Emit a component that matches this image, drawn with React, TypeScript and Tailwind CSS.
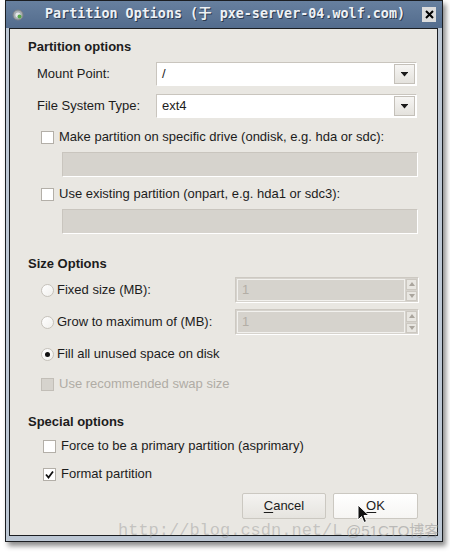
const sans = { fontFamily: '"Liberation Sans", Arial, sans-serif' };

function Combo({ value }: { value: string }) {
  return (
    <div className="flex h-[24px] w-[261px] border border-[#c9c5be] border-b-white border-r-white bg-white">
      <div className="flex flex-1 items-center pl-[5px] text-[13px] text-[#1c1c1c]">{value}</div>
      <div className="my-[1px] mr-[1px] flex w-[21px] items-center justify-center border border-[#c4c0b9] bg-gradient-to-b from-[#f6f5f3] to-[#e4e2dd]">
        <svg width="7" height="5" viewBox="0 0 7 5">
          <rect x="0" y="0" width="7" height="1" fill="#1a1a1a" />
          <path d="M0.5 1 L6.5 1 L3.5 4.5 Z" fill="#1a1a1a" />
        </svg>
      </div>
    </div>
  );
}

function Check({ checked, disabled }: { checked?: boolean; disabled?: boolean }) {
  return (
    <div
      className={`flex h-[13px] w-[13px] shrink-0 items-center justify-center border ${
        disabled ? 'border-[#c2beb7] bg-[#d6d3cd]' : 'border-[#b3afa8] bg-white'
      }`}
    >
      {checked && (
        <svg width="9" height="9" viewBox="0 0 9 9">
          <path d="M1 4.5 L3.5 7.5 L8 1.5" stroke="#111" strokeWidth="1.8" fill="none" />
        </svg>
      )}
    </div>
  );
}

function Radio({ checked }: { checked?: boolean }) {
  return (
    <div className="flex h-[13px] w-[13px] shrink-0 items-center justify-center rounded-full border border-[#c6c2bb] bg-gradient-to-br from-white to-[#f0efec]">
      {checked && <div className="h-[5px] w-[5px] rounded-full bg-[#111]" />}
    </div>
  );
}

function Spin() {
  return (
    <div className="flex h-[26px] w-[184px] border border-[#cdc9c2] border-b-white border-r-white bg-[#d6d3cd]">
      <div className="m-[1px] flex flex-1 items-center border border-[#f2f1ee] pl-[4px] text-[13px] text-[#b3aea6]">
        1
      </div>
      <div className="flex w-[12px] flex-col gap-[1px] py-[1px] pr-[1px]">
        {[0, 1].map((i) => (
          <div
            key={i}
            className="flex flex-1 items-center justify-center border border-[#ccc8c1] bg-[#e8e6e1]"
          >
            <svg width="6" height="4" viewBox="0 0 6 4">
              <path d={i === 0 ? 'M0 4 L6 4 L3 0 Z' : 'M0 0 L6 0 L3 4 Z'} fill="#aaa59d" />
            </svg>
          </div>
        ))}
      </div>
    </div>
  );
}

function Field() {
  return (
    <div className="ml-[52px] h-[25px] w-[356px] border border-[#c9c5be] border-b-white border-r-white bg-[#d6d3cd]" />
  );
}

function Button({ label, hot, active }: { label: string; hot: string; active?: boolean }) {
  const rest = label.slice(hot.length);
  return (
    <div
      className={`flex h-[26px] items-center justify-center rounded-[2px] border border-[#cbc8c1] text-[13px] text-[#1c1c1c] ${
        active ? 'bg-gradient-to-b from-white to-[#f6f5f3]' : 'bg-gradient-to-b from-[#f4f3f1] to-[#e6e4df]'
      }`}
    >
      <span>
        <span className="underline underline-offset-2">{hot}</span>
        {rest}
      </span>
    </div>
  );
}

export default function App() {
  return (
    <div className="relative h-[552px] w-[450px] overflow-hidden bg-white" style={sans}>
      <div className="ml-[5px] w-[438px] border border-[#1b1e22] bg-[#bcc7d4] shadow-[3px_4px_5px_rgba(0,0,0,0.45)]">
        {/* title bar */}
        <div className="flex h-[27px] items-center bg-gradient-to-b from-[#67809f] to-[#536c8d] pl-[6px] pr-[6px]">
          <svg width="12" height="12" viewBox="0 0 12 12" className="shrink-0">
            <circle cx="6" cy="6" r="5" fill="#a9aeb3" stroke="#7d8287" strokeWidth="1" />
            <circle cx="6" cy="6" r="2.6" fill="#e5e7e9" />
            <circle cx="7.5" cy="7.5" r="2" fill="#57a84a" />
          </svg>
          <div
            className="ml-[21px] flex-1 whitespace-pre text-[13.4px] font-bold text-[#eef1f5] [text-shadow:1px_1px_0_#2b3a4f]"
            style={{ fontFamily: '"DejaVu Sans Mono", "Noto Sans CJK SC", monospace' }}
          >
            Partition Options (于 pxe-server-04.wolf.com)
          </div>
          <div className="flex h-[15px] w-[14px] items-center justify-center bg-[#dcdcdc]">
            <svg width="9" height="9" viewBox="0 0 9 9">
              <path d="M1 1 L8 8 M8 1 L1 8" stroke="#000" strokeWidth="2" />
            </svg>
          </div>
        </div>

        {/* body */}
        <div className="pb-[5px] pl-[3px] pr-[4px]">
          <div className="flex h-[508px] flex-col border border-[#1b1e22] bg-[#e9e7e2] text-[13px] leading-[16px] text-[#1c1c1c]">
            <div className="ml-[18px] mt-[10px] font-bold">Partition options</div>

            <div className="ml-[27px] mt-[7px] flex items-center">
              <div className="w-[119px]">Mount Point:</div>
              <Combo value="/" />
            </div>
            <div className="ml-[27px] mt-[8px] flex items-center">
              <div className="w-[119px]">File System Type:</div>
              <Combo value="ext4" />
            </div>

            <div className="ml-[31px] mt-[11px] flex items-center gap-[5px]">
              <Check />
              <span>Make partition on specific drive (ondisk, e.g. hda or sdc):</span>
            </div>
            <div className="mt-[7px]">
              <Field />
            </div>
            <div className="ml-[31px] mt-[9px] flex items-center gap-[5px]">
              <Check />
              <span>Use existing partition (onpart, e.g. hda1 or sdc3):</span>
            </div>
            <div className="mt-[7px]">
              <Field />
            </div>

            <div className="ml-[18px] mt-[22px] font-bold">Size Options</div>

            <div className="ml-[31px] mt-[5px] flex items-center">
              <Radio />
              <div className="ml-[3px] w-[178px]">Fixed size (MB):</div>
              <Spin />
            </div>
            <div className="ml-[31px] mt-[6px] flex items-center">
              <Radio />
              <div className="ml-[3px] w-[178px]">Grow to maximum of (MB):</div>
              <Spin />
            </div>
            <div className="ml-[31px] mt-[11px] flex items-center">
              <Radio checked />
              <div className="ml-[3px]">Fill all unused space on disk</div>
            </div>
            <div className="ml-[31px] mt-[14px] flex items-center gap-[5px] text-[#b0aca5]">
              <Check disabled />
              <span>Use recommended swap size</span>
            </div>

            <div className="ml-[18px] mt-[22px] font-bold">Special options</div>

            <div className="ml-[33px] mt-[8px] flex items-center gap-[5px]">
              <Check />
              <span>Force to be a primary partition (asprimary)</span>
            </div>
            <div className="ml-[33px] mt-[12px] flex items-center gap-[5px]">
              <Check checked />
              <span>Format partition</span>
            </div>

            <div className="mr-[19px] mt-[11px] flex justify-end gap-[7px]">
              <div className="w-[84px]">
                <Button label="Cancel" hot="C" />
              </div>
              <div className="w-[85px]">
                <Button label="OK" hot="O" active />
              </div>
            </div>
          </div>
        </div>
      </div>

      {/* mouse cursor */}
      <svg className="absolute left-[357px] top-[504px]" width="14" height="20" viewBox="0 0 14 20">
        <path d="M1 1 L1 16 L4.5 12.5 L7 18.5 L9.5 17.5 L7 11.5 L12 11.5 Z" fill="#111" stroke="#fff" strokeWidth="1" />
      </svg>

      {/* watermark */}
      <div
        className="absolute left-[118px] top-[521px] whitespace-pre text-[17px] leading-[20px] text-[rgba(150,150,150,0.45)]"
        style={{ fontFamily: '"Liberation Mono", "Courier New", monospace' }}
      >
        http://blog.csdn.net/L
      </div>
      <div
        className="absolute left-[346px] top-[522px] whitespace-pre text-[15px] leading-[18px] text-[rgba(140,140,140,0.5)]"
        style={{ fontFamily: '"Liberation Sans", "Noto Sans CJK SC", sans-serif' }}
      >
        @51CTO博客
      </div>
    </div>
  );
}
